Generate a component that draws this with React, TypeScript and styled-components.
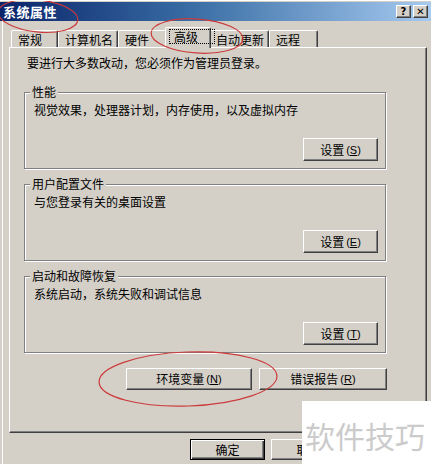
import React from "react";
import styled, { createGlobalStyle } from "styled-components";

const GlobalStyle = createGlobalStyle`
  html, body {
    margin: 0;
    padding: 0;
    background: #d4d0c8;
  }
  body {
    font-family: "Noto Sans CJK SC", "DejaVu Sans", sans-serif;
    font-size: 12px;
    color: #000;
  }
`;

const tabs = [
  { label: "常规", width: 47 },
  { label: "计算机名", width: 60 },
  { label: "硬件", width: 49 },
  { label: "高级", width: 46, active: true },
  { label: "自动更新", width: 60 },
  { label: "远程", width: 49 },
];

const groups = [
  { title: "性能", text: "视觉效果，处理器计划，内存使用，以及虚拟内存", key: "S" },
  { title: "用户配置文件", text: "与您登录有关的桌面设置", key: "E" },
  { title: "启动和故障恢复", text: "系统启动，系统失败和调试信息", key: "T" },
];

const App: React.FC = () => {
  return (
    <>
      <GlobalStyle />
      <Window>
        <TitleBar>
          <Title>系统属性</Title>
          <CaptionButtons>
            <CaptionButton>?</CaptionButton>
            <CaptionButton>✕</CaptionButton>
          </CaptionButtons>
        </TitleBar>

        <WindowBody>
          <TabStrip>
            {tabs.map((t) => (
              <Tab key={t.label} $width={t.width} $active={!!t.active}>
                {t.active ? <FocusLabel>{t.label}</FocusLabel> : t.label}
              </Tab>
            ))}
          </TabStrip>

          <Panel>
            <Intro>要进行大多数改动，您必须作为管理员登录。</Intro>
            {groups.map((g) => (
              <Group key={g.title}>
                <Legend>{g.title}</Legend>
                <GroupText>{g.text}</GroupText>
                <ButtonRow>
                  <Button $width={75} $height={23}>
                    设置 <Mnemonic>(<u>{g.key}</u>)</Mnemonic>
                  </Button>
                </ButtonRow>
              </Group>
            ))}
            <WideButtons>
              <Button $width={126} $height={22}>
                环境变量 <Mnemonic>(<u>N</u>)</Mnemonic>
              </Button>
              <Button $width={128} $height={22}>
                错误报告 <Mnemonic>(<u>R</u>)</Mnemonic>
              </Button>
            </WideButtons>
          </Panel>

          <Footer>
            <Button $width={75} $height={21} $default>
              确定
            </Button>
            <Button $width={75} $height={21}>
              取消
            </Button>
            {/* apply button sits under the watermark, label not visible */}
            <Button $width={75} $height={21} />
          </Footer>
        </WindowBody>

        <Annotations width="431" height="464" viewBox="0 0 431 464">
          <ellipse cx="38" cy="15" rx="40" ry="16" transform="rotate(6 38 15)" />
          <ellipse cx="197" cy="35" rx="46" ry="17" transform="rotate(4 197 35)" />
          <ellipse cx="188" cy="378" rx="89" ry="27" transform="rotate(-2 188 378)" />
        </Annotations>

        <Watermark>软件技巧</Watermark>
      </Window>
    </>
  );
};

export default App;

/* Styled Components */
const Window = styled.div`
  position: relative;
  width: 431px;
  height: 464px;
  overflow: hidden;
  background: #d4d0c8;
  border-top: 1px solid #fff;
  padding-top: 1px;
  box-sizing: border-box;
  display: flex;
  flex-direction: column;
`;

const TitleBar = styled.div`
  height: 19px;
  flex: none;
  display: flex;
  align-items: center;
  justify-content: space-between;
  padding: 0 3px 0 3px;
  background: linear-gradient(to right, #0a246a, #3a6ea5 45%, #a6caf0);
`;

const Title = styled.div`
  color: #fff;
  font-weight: bold;
  font-size: 13px;
  line-height: 15px;
  letter-spacing: 0.5px;
`;

const CaptionButtons = styled.div`
  display: flex;
  gap: 2px;
`;

const CaptionButton = styled.div`
  width: 15px;
  height: 13px;
  box-sizing: border-box;
  background: #d4d0c8;
  border: 1px solid;
  border-color: #fff #404040 #404040 #fff;
  box-shadow: inset -1px -1px #808080;
  display: flex;
  align-items: center;
  justify-content: center;
  font-family: "DejaVu Sans", sans-serif;
  font-weight: bold;
  font-size: 10px;
  line-height: 10px;
`;

const WindowBody = styled.div`
  flex: 1;
  margin-left: 2px;
  border-left: 1px solid #fff;
  display: flex;
  flex-direction: column;
`;

const TabStrip = styled.div`
  display: flex;
  align-items: flex-end;
  margin-top: 6px;
  padding-left: 8px;
  height: 20px;
  position: relative;
  z-index: 1;
`;

const Tab = styled.div<{ $width: number; $active: boolean }>`
  width: ${(p) => p.$width}px;
  height: ${(p) => (p.$active ? 21 : 17)}px;
  margin: ${(p) => (p.$active ? "0 -2px -1px -2px" : "0")};
  padding: ${(p) => (p.$active ? "1px 0 0 3px" : "2px 0 0 6px")};
  box-sizing: border-box;
  background: #d4d0c8;
  border-top: 1px solid #fff;
  border-left: 1px solid #fff;
  border-right: 1px solid #404040;
  box-shadow: inset -1px 0 #808080;
  border-radius: 2px 2px 0 0;
  line-height: 14px;
  white-space: nowrap;
  position: relative;
  z-index: ${(p) => (p.$active ? 2 : 1)};
`;

const FocusLabel = styled.span`
  display: inline-block;
  border: 1px dotted #000;
  padding: 0 16px 0 4px;
  line-height: 13px;
`;

const Panel = styled.div`
  width: 418px;
  height: 386px;
  margin-left: 6px;
  box-sizing: border-box;
  border: 1px solid;
  border-color: #fff #404040 #404040 #fff;
  box-shadow: inset -1px -1px #808080;
  padding: 8px 0 0 14px;
  display: flex;
  flex-direction: column;
  gap: 8px;
`;

const Intro = styled.div`
  line-height: 14px;
  margin: 0 0 7px 3px;
`;

const Group = styled.fieldset`
  width: 362px;
  margin: 0;
  padding: 4px 7px 7px 9px;
  box-sizing: border-box;
  border: 1px solid #808080;
  box-shadow: 1px 1px 0 #fff, inset 1px 1px 0 #fff;
  min-width: 0;
`;

const Legend = styled.legend`
  padding: 0 2px;
  margin-left: -4px;
  line-height: 14px;
  background: #d4d0c8;
`;

const GroupText = styled.div`
  line-height: 14px;
  margin-bottom: 21px;
`;

const ButtonRow = styled.div`
  display: flex;
  justify-content: flex-end;
`;

const Button = styled.div<{ $width: number; $height: number; $default?: boolean }>`
  width: ${(p) => p.$width}px;
  height: ${(p) => p.$height}px;
  box-sizing: border-box;
  background: #d4d0c8;
  border: 1px solid;
  border-color: ${(p) => (p.$default ? "#000" : "#fff #404040 #404040 #fff")};
  box-shadow: ${(p) =>
    p.$default
      ? "inset 1px 1px #fff, inset -1px -1px #404040, inset -2px -2px #808080"
      : "inset -1px -1px #808080"};
  display: flex;
  align-items: center;
  justify-content: center;
  line-height: 14px;
  white-space: nowrap;
`;

const Mnemonic = styled.span`
  margin-left: 2px;
  font-family: "Liberation Sans", "DejaVu Sans", sans-serif;
  font-size: 11px;
`;

const WideButtons = styled.div`
  width: 363px;
  display: flex;
  justify-content: flex-end;
  gap: 7px;
  margin-top: 7px;
`;

const Footer = styled.div`
  display: flex;
  justify-content: flex-end;
  gap: 6px;
  margin-top: 6px;
  padding-right: 4px;
`;

const Annotations = styled.svg`
  position: absolute;
  left: 0;
  top: 0;
  pointer-events: none;
  z-index: 5;
  fill: none;
  stroke: #cc3b3b;
  stroke-width: 1.2;
`;

const Watermark = styled.div`
  position: absolute;
  left: 302px;
  top: 400px;
  right: 0;
  bottom: 0;
  z-index: 6;
  background: #fff;
  color: #cbcbcb;
  font-size: 30px;
  line-height: 34px;
  padding: 17px 0 0 3px;
  letter-spacing: 0;
  white-space: nowrap;
`;
